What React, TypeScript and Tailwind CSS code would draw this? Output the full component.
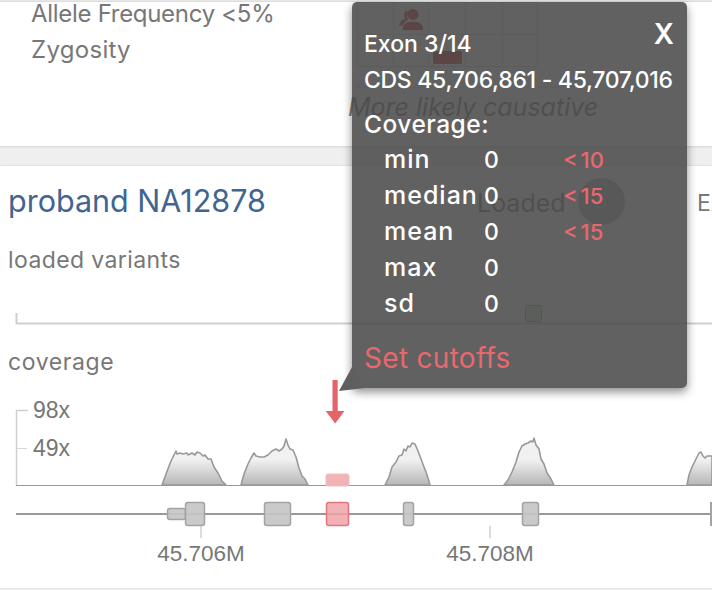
const peaks = [
  'M162 485 L166 474 L171 461 L175 453 L176 451 L177 454 L180 453 L183 454 L187 453 L188 455 L192 453 L195 455 L197 452 L200 453 L203 456 L205 455 L208 459 L211 459 L214 467 L218 473 L222 481 L226 485 Z',
  'M241 485 L244 474 L248 464 L251 458 L254 453 L256 456 L260 457 L264 457 L268 455 L272 451 L276 449 L279 451 L282 449 L284 446 L286 439 L288 445 L290 449 L293 450 L296 457 L299 468 L302 476 L305 479 L308 485 Z',
  'M385 485 L389 477 L392 467 L396 462 L399 456 L402 455 L404 449 L406 451 L408 446 L410 447 L412 443 L415 444 L418 451 L421 459 L424 467 L426 472 L428 478 L430 485 Z',
  'M504 485 L508 480 L512 472 L516 462 L519 452 L522 446 L525 444 L528 443 L531 441 L533 442 L534 438 L536 445 L539 449 L541 459 L544 464 L547 473 L551 479 L554 485 Z',
  'M687 485 L689 475 L692 467 L696 459 L699 453 L701 452 L703 456 L705 458 L707 456 L712 456 L712 485 Z',
];

const exons = [
  { x: 167, w: 19, y: 508, h: 12 },
  { x: 185, w: 20, y: 502, h: 24 },
  { x: 264, w: 27, y: 502, h: 24 },
  { x: 403, w: 11, y: 502, h: 24 },
  { x: 522, w: 17, y: 502, h: 24 },
];

const VariantTrack = () => (
  <svg width="712" height="26" viewBox="0 300 712 26" className="mt-[24px] block">
    <path d="M16.5 313 V323.5 H712" fill="none" stroke="#cfcfcf" strokeWidth="2" />
    <rect x="525.5" y="305.5" width="16" height="16" rx="2" fill="#c8eeb0" stroke="#9aa38f" />
  </svg>
);

const CoverageTrack = () => (
  <svg width="712" height="210" viewBox="0 378 712 210" className="block">
    <defs>
      <linearGradient id="cov" x1="0" y1="438" x2="0" y2="486" gradientUnits="userSpaceOnUse">
        <stop offset="0.45" stopColor="#f1f1f1" />
        <stop offset="1" stopColor="#b4b4b4" />
      </linearGradient>
    </defs>

    <path d="M28 410.5 H16.5 V486" fill="none" stroke="#cfcfcf" strokeWidth="1.5" />
    <path d="M17 448.5 H27" stroke="#d8d8d8" strokeWidth="1" />
    <text x="33" y="418" fontFamily="Liberation Sans" fontSize="23" fill="#777">98x</text>
    <text x="33" y="456" fontFamily="Liberation Sans" fontSize="23" fill="#777">49x</text>

    {peaks.map((d) => (
      <path key={d} d={d} fill="url(#cov)" stroke="#999" strokeWidth="1.6" strokeLinejoin="round" />
    ))}
    <path d="M16 485.5 H712" stroke="#999" strokeWidth="1" />

    {/* selected exon */}
    <rect x="326" y="474" width="23" height="12" rx="2" fill="#f2b3b6" stroke="#f0bcbe" />
    <path d="M332.5 380 H337.7 V411 H344.5 L335.2 423.5 L325.7 411 H332.5 Z" fill="#e5646a" />

    {/* gene model */}
    <path d="M16 514 H712" stroke="#999" strokeWidth="2" />
    {exons.map((e) => (
      <rect key={e.x} x={e.x + 0.5} y={e.y + 0.5} width={e.w - 1} height={e.h - 1} rx="2.5" fill="#c5c5c5" fillOpacity="0.92" stroke="#a3a3a3" strokeWidth="1.5" />
    ))}
    <rect x="326.5" y="502.5" width="22" height="23" rx="2.5" fill="#f0a3a7" fillOpacity="0.85" stroke="#e5767b" strokeWidth="1.5" />
    <path d="M711 502 V526" stroke="#a3a3a3" strokeWidth="2" />

    <path d="M201 526 V538 M490 526 V538" stroke="#cfcfcf" strokeWidth="1.5" />
    <text x="201" y="561" textAnchor="middle" fontFamily="Liberation Sans" fontSize="22.5" fill="#777">45.706M</text>
    <text x="490" y="561" textAnchor="middle" fontFamily="Liberation Sans" fontSize="22.5" fill="#777">45.708M</text>
  </svg>
);

const Legend = () => (
  <div className="flex flex-col">
    <div className="ml-[9px] grid w-[181px] grid-cols-[36px_35px_37px_37px_35px] grid-rows-[32px_32px] border-t border-l border-[#d4d4d4]">
      <div className="border-r border-b border-[#d4d4d4]" />
      <div className="flex items-center justify-center border-r border-b border-[#d4d4d4]">
        <svg width="24" height="24" viewBox="0 0 26 24" fill="#d42a2a">
          <circle cx="15" cy="7" r="6" />
          <path d="M4 24 C4 16 9 15 15 15 C21 15 26 16 26 24 Z" />
          <path d="M0 19 C1 14 4 13 7 12 C5 9 5 5 8 3 C10 3 10 4 9 6 C8 9 9 11 10 13 C7 14 5 16 4 19 Z" />
        </svg>
      </div>
      <div className="border-r border-b border-[#d4d4d4]" />
      <div className="border-r border-b border-[#d4d4d4]" />
      <div className="border-r border-b border-[#d4d4d4]" />
      <div className="border-r border-b border-[#d4d4d4]" />
      <div className="border-r border-b border-[#d4d4d4]" />
      <div className="flex items-end justify-center border-r border-b border-[#d4d4d4] pb-[2px]">
        <div className="h-[13px] w-[29px] rounded-[2px] bg-[#d42a2a]" />
      </div>
      <div className="border-r border-b border-[#d4d4d4]" />
      <div className="border-r border-b border-[#d4d4d4]" />
    </div>
    <svg width="230" height="10" viewBox="0 0 230 10" className="mt-[15px] block">
      <path d="M8 5 H226" stroke="#dcdcdc" />
      <path d="M14 0 L8 5 L14 10" fill="none" stroke="#dcdcdc" />
    </svg>
    <div className="text-[25px] leading-[30px] whitespace-nowrap text-[#777] italic">More likely causative</div>
  </div>
);

const Row = ({ label, value, cutoff }: { label: string; value: string; cutoff?: string }) => (
  <div className="flex h-[36px] items-center pl-[20px] font-medium">
    <span className="w-[100px] text-[25px] tracking-[1px]">{label}</span>
    <span className="w-[79px] text-[23px]">{value}</span>
    {cutoff && <span className="text-[22px] [word-spacing:-3px] text-[#e8686e]">{cutoff}</span>}
  </div>
);

const Tooltip = () => (
  <div className="absolute top-[2px] left-[352px] h-[386px] w-[335px] rounded-[5px] bg-[#4a4a4a]/[.87] px-[12px] pt-[24px] text-white shadow-[0_4px_10px_rgba(0,0,0,0.45)]">
    <svg className="absolute top-[365px] left-[-13px]" width="26" height="25" viewBox="0 0 26 25" fill="#5f5f5f">
      <path d="M13 0 L0 24 L26 21 Z" />
    </svg>
    <span className="absolute top-[11px] right-[13px] text-[28px] font-semibold">X</span>
    <div className="flex h-[36px] items-center text-[23px] font-medium">Exon 3/14</div>
    <div className="flex h-[36px] items-center text-[23px] font-medium tracking-[-0.3px]">CDS 45,706,861 - 45,707,016</div>
    <div className="mt-[8px] flex h-[36px] items-center text-[24.5px] font-medium tracking-[0.5px]">Coverage:</div>
    <Row label="min" value="0" cutoff="< 10" />
    <Row label="median" value="0" cutoff="< 15" />
    <Row label="mean" value="0" cutoff="< 15" />
    <Row label="max" value="0" />
    <Row label="sd" value="0" />
    <div className="mt-[18px] text-[28px] leading-[36px] tracking-[0.3px] text-[#e8686e]">Set cutoffs</div>
  </div>
);

export default function App() {
  return (
    <div className="relative flex h-[590px] w-[712px] flex-col overflow-hidden bg-[#efefef] font-[Inter,sans-serif] text-[#777]">
      {/* variant card, scrolled off the top */}
      <div className="mt-[2px] flex h-[144px] shrink-0 bg-white shadow-[0_0_3px_rgba(0,0,0,0.2)]">
        <div className="-mt-[6px] w-[348px] shrink-0 pl-[31px] text-[24px] leading-[36px]">
          <div className="h-[36px] tracking-[-0.3px]">Allele Frequency &lt;5%</div>
          <div className="h-[36px] tracking-[0.3px]">Zygosity</div>
        </div>
        <Legend />
      </div>

      <div className="mt-[20px] h-[422px] shrink-0 bg-white shadow-[0_0_2px_rgba(0,0,0,0.15)]">
        <div className="flex h-[70px] items-center overflow-hidden pl-[8px]">
          <h1 className="w-[469px] shrink-0 text-[30.5px] text-[#3f6590]">proband NA12878</h1>
          <span className="mt-[5px] w-[101px] shrink-0 text-[25px]">Loaded</span>
          <span className="flex h-[47px] w-[47px] shrink-0 items-center justify-center rounded-full bg-[#b9b9b9] text-[22px] text-[#cfcfcf]">5</span>
          <span className="mt-[4px] ml-[72px] shrink-0 text-[23px]">Exons</span>
        </div>
        <div className="mt-[8px] pl-[8px] text-[23px] leading-[32px] tracking-[0.4px]">loaded variants</div>
        <VariantTrack />
        <div className="mt-[20px] pl-[8px] text-[23px] leading-[32px] tracking-[0.6px]">coverage</div>
        <CoverageTrack />
      </div>

      <Tooltip />
    </div>
  );
}
